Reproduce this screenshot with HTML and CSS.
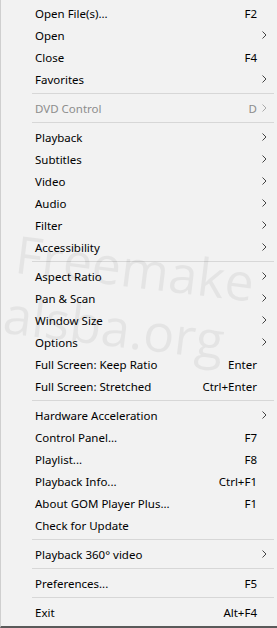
FILE: index.html
```html
<!DOCTYPE html>
<html lang="en">
  <head>
    <meta charset="UTF-8" />
    <title>Context Menu</title>
    <link rel="stylesheet" href="styles.css">
  </head>
  <body>
    <div class="menu">
      <div class="item"><span class="label">Open File(s)...</span><span class="key">F2</span><span class="arrow"></span></div>
      <div class="item"><span class="label">Open</span><span class="key"></span><span class="arrow"><svg width="5" height="8" viewBox="0 0 5 8"><path d="M0.5 0.5 L4 4 L0.5 7.5" fill="none" stroke="#444" stroke-width="1"/></svg></span></div>
      <div class="item"><span class="label">Close</span><span class="key">F4</span><span class="arrow"></span></div>
      <div class="item"><span class="label">Favorites</span><span class="key"></span><span class="arrow"><svg width="5" height="8" viewBox="0 0 5 8"><path d="M0.5 0.5 L4 4 L0.5 7.5" fill="none" stroke="#444" stroke-width="1"/></svg></span></div>
      <div class="sep"></div>
      <div class="item disabled"><span class="label">DVD Control</span><span class="key">D</span><span class="arrow"><svg width="5" height="8" viewBox="0 0 5 8"><path d="M0.5 0.5 L4 4 L0.5 7.5" fill="none" stroke="#aaa" stroke-width="1"/></svg></span></div>
      <div class="sep"></div>
      <div class="item"><span class="label">Playback</span><span class="key"></span><span class="arrow"><svg width="5" height="8" viewBox="0 0 5 8"><path d="M0.5 0.5 L4 4 L0.5 7.5" fill="none" stroke="#444" stroke-width="1"/></svg></span></div>
      <div class="item"><span class="label">Subtitles</span><span class="key"></span><span class="arrow"><svg width="5" height="8" viewBox="0 0 5 8"><path d="M0.5 0.5 L4 4 L0.5 7.5" fill="none" stroke="#444" stroke-width="1"/></svg></span></div>
      <div class="item"><span class="label">Video</span><span class="key"></span><span class="arrow"><svg width="5" height="8" viewBox="0 0 5 8"><path d="M0.5 0.5 L4 4 L0.5 7.5" fill="none" stroke="#444" stroke-width="1"/></svg></span></div>
      <div class="item"><span class="label">Audio</span><span class="key"></span><span class="arrow"><svg width="5" height="8" viewBox="0 0 5 8"><path d="M0.5 0.5 L4 4 L0.5 7.5" fill="none" stroke="#444" stroke-width="1"/></svg></span></div>
      <div class="item"><span class="label">Filter</span><span class="key"></span><span class="arrow"><svg width="5" height="8" viewBox="0 0 5 8"><path d="M0.5 0.5 L4 4 L0.5 7.5" fill="none" stroke="#444" stroke-width="1"/></svg></span></div>
      <div class="item"><span class="label">Accessibility</span><span class="key"></span><span class="arrow"><svg width="5" height="8" viewBox="0 0 5 8"><path d="M0.5 0.5 L4 4 L0.5 7.5" fill="none" stroke="#444" stroke-width="1"/></svg></span></div>
      <div class="sep"></div>
      <div class="item"><span class="label">Aspect Ratio</span><span class="key"></span><span class="arrow"><svg width="5" height="8" viewBox="0 0 5 8"><path d="M0.5 0.5 L4 4 L0.5 7.5" fill="none" stroke="#444" stroke-width="1"/></svg></span></div>
      <div class="item"><span class="label">Pan &amp; Scan</span><span class="key"></span><span class="arrow"><svg width="5" height="8" viewBox="0 0 5 8"><path d="M0.5 0.5 L4 4 L0.5 7.5" fill="none" stroke="#444" stroke-width="1"/></svg></span></div>
      <div class="item"><span class="label">Window Size</span><span class="key"></span><span class="arrow"><svg width="5" height="8" viewBox="0 0 5 8"><path d="M0.5 0.5 L4 4 L0.5 7.5" fill="none" stroke="#444" stroke-width="1"/></svg></span></div>
      <div class="item"><span class="label">Options</span><span class="key"></span><span class="arrow"><svg width="5" height="8" viewBox="0 0 5 8"><path d="M0.5 0.5 L4 4 L0.5 7.5" fill="none" stroke="#444" stroke-width="1"/></svg></span></div>
      <div class="item"><span class="label">Full Screen: Keep Ratio</span><span class="key">Enter</span><span class="arrow"></span></div>
      <div class="item"><span class="label">Full Screen: Stretched</span><span class="key">Ctrl+Enter</span><span class="arrow"></span></div>
      <div class="sep"></div>
      <div class="item"><span class="label">Hardware Acceleration</span><span class="key"></span><span class="arrow"><svg width="5" height="8" viewBox="0 0 5 8"><path d="M0.5 0.5 L4 4 L0.5 7.5" fill="none" stroke="#444" stroke-width="1"/></svg></span></div>
      <div class="item"><span class="label">Control Panel...</span><span class="key">F7</span><span class="arrow"></span></div>
      <div class="item"><span class="label">Playlist...</span><span class="key">F8</span><span class="arrow"></span></div>
      <div class="item"><span class="label">Playback Info...</span><span class="key">Ctrl+F1</span><span class="arrow"></span></div>
      <div class="item"><span class="label">About GOM Player Plus...</span><span class="key">F1</span><span class="arrow"></span></div>
      <div class="item"><span class="label">Check for Update</span><span class="key"></span><span class="arrow"></span></div>
      <div class="sep"></div>
      <div class="item"><span class="label">Playback 360° video</span><span class="key"></span><span class="arrow"><svg width="5" height="8" viewBox="0 0 5 8"><path d="M0.5 0.5 L4 4 L0.5 7.5" fill="none" stroke="#444" stroke-width="1"/></svg></span></div>
      <div class="sep"></div>
      <div class="item"><span class="label">Preferences...</span><span class="key">F5</span><span class="arrow"></span></div>
      <div class="sep"></div>
      <div class="item"><span class="label">Exit</span><span class="key">Alt+F4</span><span class="arrow"></span></div>

      <div class="watermark">
        <span class="wm-line wm-top">Freemake</span>
        <span class="wm-line wm-bottom">alsba.org</span>
      </div>
    </div>
  </body>
</html>
```

FILE: styles.css
```css
html,
body {
  margin: 0;
  padding: 0;
  background-color: #f2f2f2;
}
.menu {
  position: relative;
  width: 277px;
  height: 628px;
  box-sizing: border-box;
  padding-top: 2px;
  background-color: #f2f2f2;
  border-left: 1px solid #cfcfcf;
  border-bottom: 2px solid #5a5a5a;
  overflow: hidden;
  font-family: "Noto Sans", "Open Sans", Arial, sans-serif;
  font-size: 11.5px;
  color: #000;
}
.item {
  display: grid;
  grid-template-columns: 1fr auto 20px;
  align-items: center;
  height: 22px;
  padding-left: 34px;
}
.label {
  white-space: nowrap;
}
.key {
  text-align: right;
  white-space: nowrap;
}
.arrow {
  display: flex;
  align-items: center;
  padding-left: 5px;
}
.arrow svg {
  display: block;
}
.disabled {
  color: #8d8d8d;
}
.sep {
  height: 1px;
  margin: 3px 3px 3px 31px;
  background-color: #d7d7d7;
}
.watermark {
  position: absolute;
  left: 0;
  top: 0;
  width: 100%;
  height: 100%;
  pointer-events: none;
}
.wm-line {
  position: absolute;
  font-family: "Open Sans", "Noto Sans", sans-serif;
  font-size: 52px;
  line-height: 1;
  color: rgba(0, 0, 0, 0.055);
  white-space: nowrap;
  transform: rotate(7deg);
  transform-origin: left top;
}
.wm-top {
  left: 18px;
  top: 227px;
}
.wm-bottom {
  left: 6px;
  top: 287px;
}
```
